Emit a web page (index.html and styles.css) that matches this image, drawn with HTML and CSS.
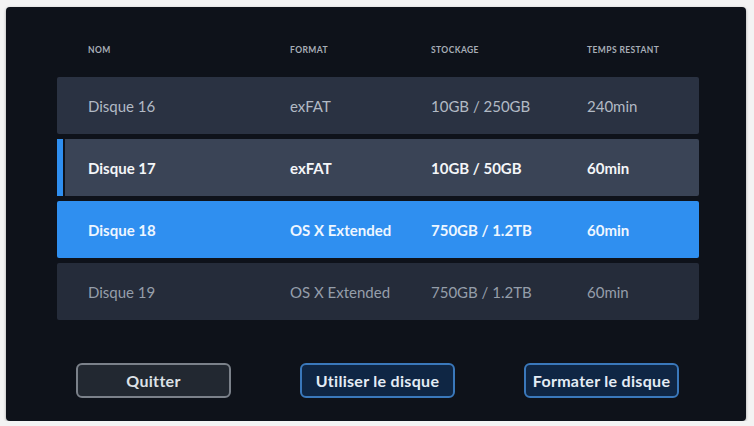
FILE: index.html
```html
<!DOCTYPE html>
<html lang="fr">
<head>
    <meta charset="UTF-8">
    <meta name="viewport" content="width=device-width, initial-scale=1.0">
    <title>Sélection du disque</title>
    <link rel="stylesheet" href="styles.css">
</head>
<body>
    <div class="panel">
        <div class="head">
            <span>Nom</span>
            <span>Format</span>
            <span>Stockage</span>
            <span>Temps restant</span>
        </div>
        <div class="rows">
            <div class="row">
                <span>Disque 16</span>
                <span>exFAT</span>
                <span>10GB / 250GB</span>
                <span>240min</span>
            </div>
            <div class="row current">
                <span>Disque 17</span>
                <span>exFAT</span>
                <span>10GB / 50GB</span>
                <span>60min</span>
            </div>
            <div class="row selected">
                <span>Disque 18</span>
                <span>OS X Extended</span>
                <span>750GB / 1.2TB</span>
                <span>60min</span>
            </div>
            <div class="row dim">
                <span>Disque 19</span>
                <span>OS X Extended</span>
                <span>750GB / 1.2TB</span>
                <span>60min</span>
            </div>
        </div>
        <div class="actions">
            <button class="btn">Quitter</button>
            <button class="btn primary">Utiliser le disque</button>
            <button class="btn primary">Formater le disque</button>
        </div>
    </div>
</body>
</html>
```

FILE: styles.css
```css
body {
    margin: 0;
    padding: 7px 8px 0 6px;
    background: #f3f3f3;
    font-family: Lato, 'Noto Sans', sans-serif;
}
.panel {
    width: 740px;
    height: 414px;
    box-sizing: border-box;
    background: #0e121a;
    border-radius: 4px;
    box-shadow: 0 1px 3px rgba(0, 0, 0, 0.35);
    padding: 31px 47px 0 51px;
}
.head, .row {
    display: grid;
    grid-template-columns: 202px 141px 156px 1fr;
    align-items: center;
    padding-left: 31px;
}
.head {
    height: 24px;
    margin-bottom: 15px;
    font-size: 8.5px;
    font-weight: 700;
    letter-spacing: 0.4px;
    text-transform: uppercase;
    color: #a7aeb7;
}
.rows {
    display: flex;
    flex-direction: column;
    gap: 5px;
}
.row {
    height: 57px;
    border-radius: 2px;
    background: #2a3242;
    color: #b2bac5;
    font-size: 15px;
}
.row.current {
    padding-left: 25px;
    border-left: 6px solid #2f8ff0;
    border-radius: 0 2px 2px 0;
    background: linear-gradient(to right, #0e121a 2px, #3a4456 2px);
    color: #f4f6f8;
    font-weight: 700;
}
.row.selected {
    background: #2f8ff0;
    color: #eef6ff;
    font-weight: 700;
}
.row.dim {
    background: #252c3a;
    color: #959eaa;
}
.actions {
    display: flex;
    gap: 69px;
    margin-top: 43px;
    padding-left: 19px;
}
.btn {
    width: 155px;
    height: 35px;
    border: 2px solid #7b818a;
    border-radius: 6px;
    background: #222831;
    color: #dde1e6;
    font-family: Lato, 'Noto Sans', sans-serif;
    font-size: 16px;
    font-weight: 700;
    letter-spacing: 0.3px;
    padding: 0;
}
.btn.primary {
    border-color: #3a78bb;
    background: #0f2644;
    color: #e4ecf5;
}
```
